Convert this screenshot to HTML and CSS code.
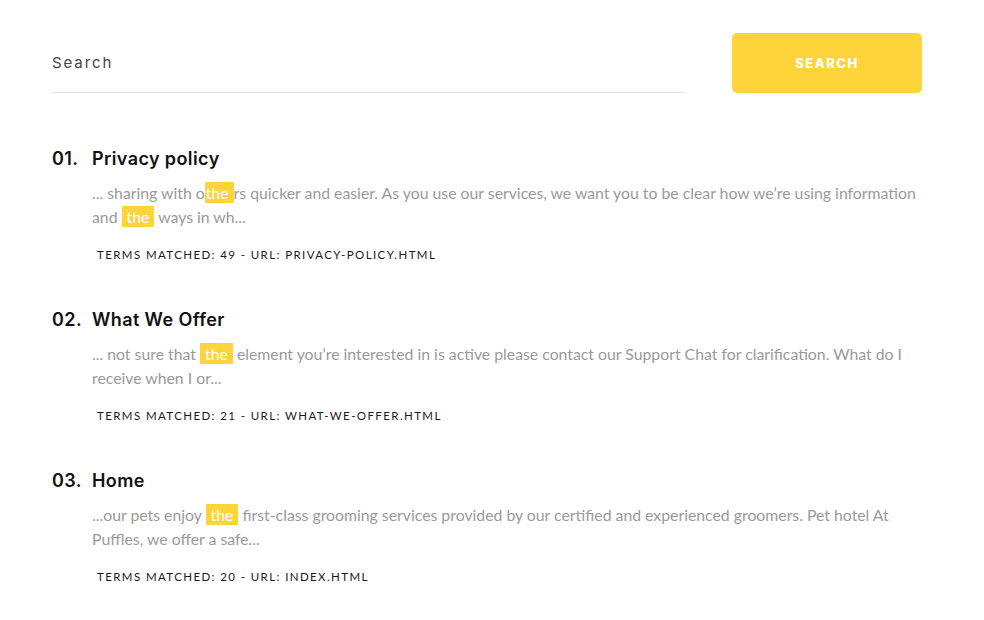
FILE: index.html
```html
<!DOCTYPE html>
<html lang="en">
<head>
<meta charset="utf-8">
<title>Search results</title>
<link rel="stylesheet" href="styles.css">
</head>
<body>
<main class="page">
  <form class="search-form">
    <input class="search-input" type="text" placeholder="Search">
    <button class="search-btn" type="button">SEARCH</button>
  </form>
  <ol class="results">
    <li class="result">
      <h3 class="result-title"><span class="num">01.</span><span>Privacy policy</span></h3>
      <p class="excerpt">... sharing with o<mark>the&nbsp;</mark>rs quicker and easier. As you use our services, we want you to be clear how we’re using information and <mark>&nbsp;the&nbsp;</mark> ways in wh...</p>
      <div class="meta">Terms matched: 49 - URL: privacy-policy.html</div>
    </li>
    <li class="result">
      <h3 class="result-title"><span class="num">02.</span><span>What We Offer</span></h3>
      <p class="excerpt">... not sure that <mark>&nbsp;the&nbsp;</mark> element you’re interested in is active please contact our Support Chat for clarification. What do I receive when I or...</p>
      <div class="meta">Terms matched: 21 - URL: what-we-offer.html</div>
    </li>
    <li class="result">
      <h3 class="result-title"><span class="num">03.</span><span>Home</span></h3>
      <p class="excerpt">...our pets enjoy <mark>&nbsp;the&nbsp;</mark> first-class grooming services provided by our certified and experienced groomers. Pet hotel At Puffles, we offer a safe...</p>
      <div class="meta">Terms matched: 20 - URL: index.html</div>
    </li>
  </ol>
</main>
</body>
</html>
```

FILE: styles.css
```css
* { box-sizing: border-box; }
html, body { margin: 0; padding: 0; background: #fff; }
body { font-family: "Lato", "Liberation Sans", sans-serif; }

.page {
  width: 870px;
  margin-left: 52px;
  padding-top: 33px;
}

.search-form {
  display: flex;
  align-items: flex-end;
  gap: 47px;
}

.search-input {
  width: 633px;
  height: 60px;
  border: none;
  border-bottom: 1px solid #e2e2e2;
  padding: 0;
  font-family: "Inter", "Noto Sans", sans-serif;
  font-size: 15px;
  letter-spacing: 1.9px;
  color: #444;
  outline: none;
  background: transparent;
}
.search-input::placeholder { color: #444; }

.search-btn {
  width: 190px;
  height: 60px;
  border: none;
  border-radius: 5px;
  background: #ffd43b;
  color: #fff;
  font-family: "Inter", "Noto Sans", sans-serif;
  font-weight: 800;
  font-size: 13px;
  letter-spacing: 1.5px;
  cursor: pointer;
}

.results {
  list-style: none;
  margin: 52px 0 0 0;
  padding: 0;
  display: flex;
  flex-direction: column;
  gap: 43px;
}

.result-title {
  display: flex;
  margin: 0;
  font-family: "Inter", "Noto Sans", sans-serif;
  font-weight: 600;
  font-size: 18px;
  line-height: 27px;
  letter-spacing: 0.4px;
  color: #111;
}
.result-title .num { width: 40px; flex: none; }

.excerpt {
  margin: 9px -8px 0 40px;
  font-size: 15.8px;
  line-height: 24px;
  color: #9a9a9a;
}
.excerpt mark {
  background: #ffd43b;
  color: #fff;
  padding: 1px 1px;
}

.meta {
  margin: 18px 0 0 45px;
  font-size: 11.5px;
  line-height: 16px;
  letter-spacing: 1.4px;
  text-transform: uppercase;
  color: #1a1a1a;
}
```
